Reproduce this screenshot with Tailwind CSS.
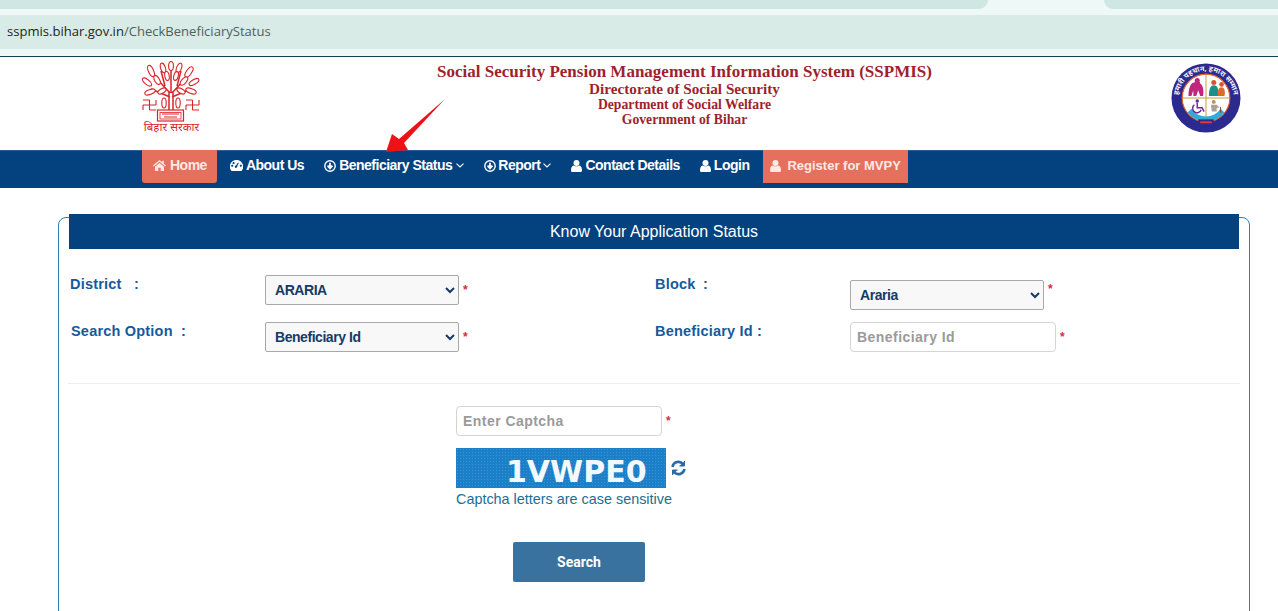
<!DOCTYPE html>
<html lang="en">
<head>
<meta charset="UTF-8" />
<title>Check Beneficiary Status</title>
<script src="https://cdn.jsdelivr.net/npm/@tailwindcss/browser@4"></script>
</head>
<body class="relative h-[611px] overflow-hidden bg-white font-['Liberation_Sans',Arial,sans-serif]">
  <!-- Browser chrome -->
  <div class="h-[56px] bg-[#eef8f6]">
    <div class="flex h-[9px] justify-between">
      <div class="w-[988px] bg-[#cfe7e2] rounded-br-[10px]"></div>
      <div class="w-[174px] bg-[#cfe7e2] rounded-bl-[10px]"></div>
    </div>
    <div class="mt-[6px] h-[34px] bg-[#d8ebe6] pl-[7px] flex items-center text-[13.05px] font-['Open_Sans',sans-serif] text-[#50605c]">
      <span class="text-[#1c2523]">sspmis.bihar.gov.in</span>/CheckBeneficiaryStatus
    </div>
  </div>

  <!-- Header -->
  <header class="h-[94px] border-t border-[#163f4f] flex pl-[141px] pr-[37px] pt-[4px]">
    <svg width="60" height="74" viewBox="0 0 60 74" class="shrink-0" fill="#fff" stroke="#d8232a" stroke-width="1.1">
      <path d="M28 49 V30 M32 49 V30 M30 32 L30 8 M29 32 L16 18 M31 32 L44 18 M29 36 L10 28 M31 36 L50 28 M24 25 L20 10 M36 25 L40 10" fill="none" stroke-width="1.5"/>
      <ellipse cx="30" cy="5" rx="2.4" ry="4.5"/>
      <ellipse cx="22" cy="7" rx="2.4" ry="5" transform="rotate(-20 22 7)"/>
      <ellipse cx="38" cy="7" rx="2.4" ry="5" transform="rotate(20 38 7)"/>
      <ellipse cx="10" cy="10" rx="2.6" ry="6" transform="rotate(-25 10 10)"/>
      <ellipse cx="48" cy="11" rx="2.6" ry="6" transform="rotate(35 48 11)"/>
      <ellipse cx="6" cy="21" rx="2.4" ry="5.5" transform="rotate(-50 6 21)"/>
      <ellipse cx="53" cy="21" rx="2.4" ry="5.5" transform="rotate(60 53 21)"/>
      <ellipse cx="16" cy="19" rx="2.4" ry="5" transform="rotate(-30 16 19)"/>
      <ellipse cx="43" cy="20" rx="2.4" ry="5" transform="rotate(40 43 20)"/>
      <ellipse cx="9" cy="31" rx="2.4" ry="5.5" transform="rotate(70 9 31)"/>
      <ellipse cx="50" cy="30" rx="2.4" ry="5.5" transform="rotate(-70 50 30)"/>
      <ellipse cx="21" cy="30" rx="2.2" ry="4.5" transform="rotate(60 21 30)"/>
      <ellipse cx="40" cy="30" rx="2.2" ry="4.5" transform="rotate(-60 40 30)"/>
      <ellipse cx="23" cy="42" rx="2.2" ry="5"/>
      <ellipse cx="37" cy="42" rx="2.2" ry="5"/>
      <ellipse cx="26" cy="15" rx="2.2" ry="4.5" transform="rotate(-10 26 15)"/>
      <ellipse cx="35" cy="15" rx="2.2" ry="4.5" transform="rotate(15 35 15)"/>
      <path d="M8.5 39 V49 M2 44 H15 M8.5 39 H2 M2 44 V49 M8.5 49 H15 M15 44 V39" fill="none"/>
      <path d="M51.5 39 V49 M45 44 H58 M51.5 39 H45 M45 44 V49 M51.5 49 H58 M58 44 V39" fill="none"/>
      <rect x="16.5" y="49" width="26" height="11" stroke-width="1.2"/>
      <rect x="19" y="51.5" width="21" height="6.5" stroke-width=".8"/>
      <path d="M21 53 H38 M23 56 H36" fill="none" stroke-width="1"/>
      <text x="30.5" y="70" text-anchor="middle" fill="#d8232a" stroke="none" font-size="11.5" font-family="'Noto Sans Devanagari','Lohit Devanagari','Noto Sans',sans-serif">बिहार सरकार</text>
    </svg>

    <div class="flex-1 text-center font-['Liberation_Serif',serif] font-bold text-[#a01f2e] pr-[3px]">
      <div class="text-[17px] leading-[18px] mt-[2px]">Social Security Pension Management Information System (SSPMIS)</div>
      <div class="text-[15.2px] leading-[16px]">Directorate of Social Security</div>
      <div class="text-[13.7px] leading-[15px]">Department of Social Welfare</div>
      <div class="text-[13.7px] leading-[15px]">Government of Bihar</div>
    </div>

    <svg width="70" height="70" viewBox="0 0 72 72" class="shrink-0 mt-[2px]">
      <circle cx="36" cy="36" r="35.5" fill="#2b2a8f"/>
      <path id="ringText" d="M8 42 A28.5 28.5 0 1 1 64 42" fill="none"/>
      <text font-size="7.5" font-weight="700" fill="#f4f2f6" font-family="'Noto Sans Devanagari','Noto Sans',sans-serif"><textPath href="#ringText" startOffset="50%" text-anchor="middle">हमारी पहचान, हमारा सम्मान</textPath></text>
      <circle cx="36" cy="36" r="24.5" fill="#fff" stroke="#e2622c" stroke-width="1.2"/>
      <path d="M36 12 V60 M12 36 H60" stroke="#c99a3a" stroke-width="1"/>
      <path d="M17 51 A24 24 0 0 0 55 51 L51 47 A18 18 0 0 1 21 47 Z" fill="#35a9d8"/>
      <path d="M28 58 H44 V65 H28 Z" fill="#2b2a8f"/>
      <path d="M30 61 H42" stroke="#e23a3a" stroke-width="2"/>
      <!-- top-left: elderly couple -->
      <path d="M18 34 C18 26 20 20 24 20 C26 17 30 18 30 21 C33 23 34 28 33 34 H30 L28 28 L26 34 H23 L23 28 L21 34 Z" fill="#c0267d"/>
      <circle cx="27" cy="18" r="2.6" fill="#c0267d"/>
      <!-- top-right: family -->
      <circle cx="44" cy="20" r="2.6" fill="#d4582a"/>
      <circle cx="52" cy="22" r="2.4" fill="#d4582a"/>
      <path d="M39 34 C39 26 41 23 44 23 C48 23 49 27 49 34 Z" fill="#1c8f8a"/>
      <path d="M48 34 C48 28 49 25 52 25 C55 25 56 29 55 34 Z" fill="#e06a2e"/>
      <!-- bottom-left: wheelchair -->
      <circle cx="27" cy="39" r="1.8" fill="#6a2a8f"/>
      <path d="M27 41 V46 H32 L34 50 M24 43 A4.5 4.5 0 1 0 31 48" fill="none" stroke="#6a2a8f" stroke-width="1.5"/>
      <!-- bottom-right: old man with stick -->
      <circle cx="44" cy="40" r="2" fill="#c78a5b"/>
      <path d="M41 43 H47 L50 46 L47 46 V50 H42 Z" fill="#a8a294"/>
      <path d="M51 45 V51" stroke="#7b4d2b" stroke-width="1"/>
    </svg>
  </header>

  <!-- Nav -->
  <nav class="h-[38px] bg-[#03417f] border-t border-[#2a5f93] pl-[142px] flex items-start text-white text-[14px] tracking-[-0.5px] font-bold">
    <a class="h-[33px] -mt-px pb-[2px] bg-[#e5705d] rounded-b-[3px] pl-[11px] pr-[10px] flex items-center gap-[4px] text-[#fde9e4]">
      <svg width="13" height="11" viewBox="0 0 13 11" fill="#fde9e4"><path d="M6.5 0 L0 5.6 L.8 6.5 L6.5 1.7 L12.2 6.5 L13 5.6 L10.8 3.7 V.8 H9.2 V2.3 Z M2 6.7 V11 H5.3 V7.8 H7.7 V11 H11 V6.7 L6.5 3 Z"/></svg>
      Home
    </a>
    <a class="h-[31px] pb-[2px] ml-[3px] px-[10px] flex items-center gap-[3px]">
      <svg width="13" height="11" viewBox="0 0 13 11" fill="#fff"><path d="M6.5 0 A6.5 6.5 0 0 0 1 10.2 L1.4 11 H11.6 L12 10.2 A6.5 6.5 0 0 0 6.5 0 Z M6 5.5 L8 2.5 L8.8 3 L7.2 6.3 A1.2 1.2 0 1 1 6 5.5 Z M2.2 6.7 a1 1 0 1 1 .01 0 Z M10.8 6.7 a1 1 0 1 1 .01 0 Z M3.6 3.9 a1 1 0 1 1 .01 0 Z"/></svg>
      About Us
    </a>
    <a class="h-[31px] pb-[2px] px-[10px] flex items-center gap-[3px]">
      <svg width="12" height="12" viewBox="0 0 12 12" fill="none" stroke="#fff"><circle cx="6" cy="6" r="5.2" stroke-width="1.4"/><path d="M6 2.8 V7.5 M3.6 5.6 L6 8.4 L8.4 5.6" stroke-width="1.8"/></svg>
      Beneficiary Status
      <svg class="ml-[1px]" width="8" height="5" viewBox="0 0 8 5" fill="none" stroke="#fff" stroke-width="1.1"><path d="M.5 .7 L4 4 L7.5 .7"/></svg>
    </a>
    <a class="h-[31px] pb-[2px] px-[10px] flex items-center gap-[2px]">
      <svg width="12" height="12" viewBox="0 0 12 12" fill="none" stroke="#fff"><circle cx="6" cy="6" r="5.2" stroke-width="1.4"/><path d="M6 2.8 V7.5 M3.6 5.6 L6 8.4 L8.4 5.6" stroke-width="1.8"/></svg>
      Report
      <svg class="ml-[1px]" width="8" height="5" viewBox="0 0 8 5" fill="none" stroke="#fff" stroke-width="1.1"><path d="M.5 .7 L4 4 L7.5 .7"/></svg>
    </a>
    <a class="h-[31px] pb-[2px] px-[10px] flex items-center gap-[3px]">
      <svg width="11" height="12" viewBox="0 0 11 12" fill="#fff"><circle cx="5.5" cy="3" r="3"/><path d="M2.5 5.6 C3.5 6.6 7.5 6.6 8.5 5.6 C10 6 11 7.5 11 10.5 C11 11.5 10.2 12 9.5 12 H1.5 C.8 12 0 11.5 0 10.5 C0 7.5 1 6 2.5 5.6 Z"/></svg>
      Contact Details
    </a>
    <a class="h-[31px] pb-[2px] px-[10px] flex items-center gap-[3px]">
      <svg width="11" height="12" viewBox="0 0 11 12" fill="#fff"><circle cx="5.5" cy="3" r="3"/><path d="M2.5 5.6 C3.5 6.6 7.5 6.6 8.5 5.6 C10 6 11 7.5 11 10.5 C11 11.5 10.2 12 9.5 12 H1.5 C.8 12 0 11.5 0 10.5 C0 7.5 1 6 2.5 5.6 Z"/></svg>
      Login
    </a>
    <a class="h-[33px] -mt-px pb-[2px] ml-[4px] bg-[#e5705d] px-[7px] flex items-center gap-[6px] text-[13px] tracking-normal text-[#fde9e4]">
      <svg width="11" height="12" viewBox="0 0 11 12" fill="#fde9e4"><circle cx="5.5" cy="3" r="3"/><path d="M2.5 5.6 C3.5 6.6 7.5 6.6 8.5 5.6 C10 6 11 7.5 11 10.5 C11 11.5 10.2 12 9.5 12 H1.5 C.8 12 0 11.5 0 10.5 C0 7.5 1 6 2.5 5.6 Z"/></svg>
      Register for MVPY
    </a>
  </nav>

  <!-- Status panel -->
  <main class="ml-[58px] mr-[28px] mt-[29px] h-[500px] border border-[#2f7fb5] rounded-[8px] text-[14px]">
    <h1 class="-mt-[4px] mx-[10px] h-[35px] pt-[1px] bg-[#03417f] text-white text-[16px] flex items-center justify-center">Know Your Application Status</h1>

    <div class="h-[135px] mx-[9px] border-b border-[#eeeeee] pt-[26px] flex text-[#155a9c] font-bold tracking-[0.2px]">
      <div class="w-[587px] pl-[2px]">
        <div class="flex h-[30px]">
          <div class="w-[195px] text-[14.5px] leading-[18px]"><span class="inline-block w-[64px]">District</span>:</div>
          <select class="w-[194px] h-[30px] border border-[#a8a8a8] rounded-[2px] bg-[#f8f8f8] pl-[5px] text-[14px] tracking-[-0.45px] text-[#163a68]"><option>ARARIA</option></select>
          <span class="ml-[4px] mt-[6px] text-[#d2303c] text-[12px]">*</span>
        </div>
        <div class="flex h-[30px] mt-[17px]">
          <div class="w-[195px] pl-[1px] text-[14.5px] leading-[18px]"><span class="inline-block w-[110px]">Search Option</span>:</div>
          <select class="w-[194px] h-[30px] border border-[#a8a8a8] rounded-[2px] bg-[#f8f8f8] pl-[5px] text-[14px] tracking-[-0.45px] text-[#163a68]"><option>Beneficiary Id</option></select>
          <span class="ml-[4px] mt-[6px] text-[#d2303c] text-[12px]">*</span>
        </div>
      </div>
      <div class="flex-1">
        <div class="flex h-[30px]">
          <div class="w-[195px] text-[14.5px] leading-[18px]"><span class="inline-block w-[48px]">Block</span>:</div>
          <select class="mt-[5px] w-[194px] h-[30px] border border-[#a8a8a8] rounded-[2px] bg-[#f8f8f8] pl-[5px] text-[14px] tracking-[-0.45px] text-[#163a68]"><option>Araria</option></select>
          <span class="ml-[4px] mt-[5px] text-[#d2303c] text-[12px]">*</span>
        </div>
        <div class="flex h-[30px] mt-[17px]">
          <div class="w-[195px] text-[14.5px] leading-[18px]">Beneficiary Id :</div>
          <input placeholder="Beneficiary Id" class="w-[206px] h-[30px] border border-[#d4d4d4] rounded-[4px] px-[6px] text-[14px] font-bold tracking-[0.45px] placeholder:text-[#9a9a9a]" />
          <span class="ml-[4px] mt-[6px] text-[#d2303c] text-[12px]">*</span>
        </div>
      </div>
    </div>

    <div class="pl-[397px] pt-[22px]">
      <div class="flex h-[30px]">
        <input placeholder="Enter Captcha" class="w-[206px] h-[30px] border border-[#d4d4d4] rounded-[4px] px-[6px] text-[14px] font-bold tracking-[0.45px] placeholder:text-[#9a9a9a]" />
        <span class="ml-[4px] mt-[6px] text-[#d2303c] text-[12px] font-bold">*</span>
      </div>
      <div class="flex mt-[12px]">
        <div class="w-[210px] h-[40px] bg-[#1c80c9] bg-[radial-gradient(#3a93d4_1px,transparent_1px)] bg-[size:3px_3px] pl-[50px] pt-[7px] flex items-center text-[#f2f8fc] font-['DejaVu_Sans',sans-serif] font-bold text-[30px]">1VWPE0</div>
        <svg class="ml-[5px] mt-[12px]" width="15" height="16" viewBox="0 0 15 16" fill="none" stroke="#2a6aa8" stroke-width="2.6"><path d="M1.5 7 A6 6 0 0 1 12 4"/><path d="M13.5 9 A6 6 0 0 1 3 12"/><path d="M13.5 1 V6 H8.5" fill="#2a6aa8" stroke-width="1"/><path d="M1.5 15 V10 H6.5" fill="#2a6aa8" stroke-width="1"/></svg>
      </div>
      <p class="mt-[2px] text-[14.4px] leading-[18px] text-[#1c6e94]">Captcha letters are case sensitive</p>
      <button class="block ml-[57px] mt-[34px] w-[132px] h-[40px] bg-[#3a729f] rounded-[2px] text-white text-[14px] font-bold font-['Roboto',sans-serif]">Search</button>
    </div>
  </main>

  <!-- Annotation arrow over the header -->
  <svg class="absolute left-[380px] top-[95px]" width="70" height="60" viewBox="380 95 70 60">
    <path d="M386 152 L392 134 L399 139 L445 99 L404 143 L408 150 Z" fill="#ee1118"/>
  </svg>
</body>
</html>
